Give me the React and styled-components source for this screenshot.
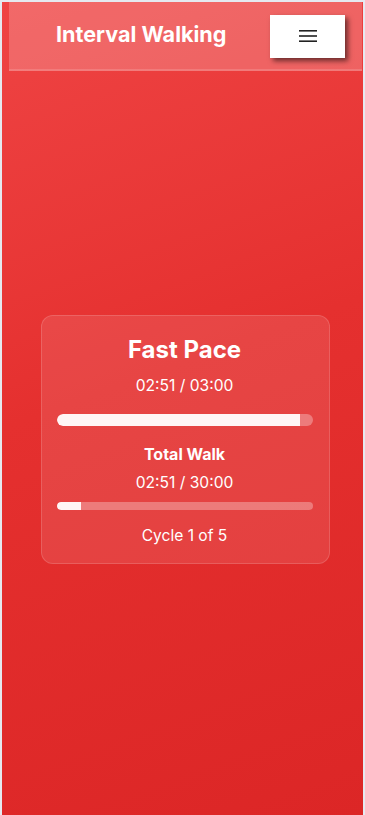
import styled, { createGlobalStyle } from "styled-components";

const GlobalStyle = createGlobalStyle`
  html, body {
    margin: 0;
    padding: 0;
    background: #e5e9f0;
  }
  body {
    font-family: Inter, "Noto Sans", "Liberation Sans", sans-serif;
  }
`;

export default function App() {
  return (
    <>
      <GlobalStyle />
      <Screen>
        <Header>
          <Title>Interval Walking</Title>
          <MenuButton aria-label="Menu">
            <svg width="18" height="12" viewBox="0 0 18 12">
              <rect x="0" y="0" width="18" height="1.6" fill="#222" />
              <rect x="0" y="5.2" width="18" height="1.6" fill="#222" />
              <rect x="0" y="10.4" width="18" height="1.6" fill="#222" />
            </svg>
          </MenuButton>
        </Header>
        <Main>
          <Card>
            <PhaseName>Fast Pace</PhaseName>
            <TimeText>02:51 / 03:00</TimeText>
            <Track $height={12} $gap={16}>
              <Fill style={{ width: "95%" }} />
            </Track>
            <SubTitle>Total Walk</SubTitle>
            <TimeText $tight>02:51 / 30:00</TimeText>
            <Track $height={8} $gap={7}>
              <Fill style={{ width: "9.5%" }} />
            </Track>
            <Cycle>Cycle 1 of 5</Cycle>
          </Card>
        </Main>
      </Screen>
    </>
  );
}

const Screen = styled.div`
  box-sizing: border-box;
  min-height: 815px;
  margin: 2px 2px 0 2px;
  padding: 0 1px 0 7px;
  background: linear-gradient(160deg, #ef4444 0%, #e5302f 45%, #dc2626 100%);
  display: flex;
  flex-direction: column;
`;

const Header = styled.header`
  box-sizing: border-box;
  height: 69px;
  display: flex;
  align-items: center;
  padding: 0 17px 0 47px;
  gap: 44px;
  background: rgba(255, 255, 255, 0.2);
  border-bottom: 2px solid rgba(255, 255, 255, 0.15);
`;

const Title = styled.h1`
  margin: 0 0 4px;
  flex: 1;
  font-size: 21.6px;
  line-height: 28px;
  font-weight: 700;
  color: #fff;
  white-space: nowrap;
`;

const MenuButton = styled.button`
  width: 75px;
  height: 43px;
  margin-top: 1px;
  border: none;
  background: #fff;
  display: flex;
  align-items: center;
  justify-content: center;
  box-shadow: 3px 3px 5px rgba(0, 0, 0, 0.55);
`;

const Main = styled.main`
  flex: 1;
  display: flex;
  align-items: center;
  justify-content: center;
  padding-bottom: 9px;
`;

const Card = styled.section`
  box-sizing: border-box;
  width: 289px;
  margin-left: -1px;
  padding: 18px 16px 15px 15px;
  border-radius: 12px;
  background: rgba(255, 255, 255, 0.1);
  border: 1px solid rgba(255, 255, 255, 0.15);
  color: #fff;
  text-align: center;
  display: flex;
  flex-direction: column;
`;

const PhaseName = styled.h2`
  margin: 0;
  font-size: 24px;
  line-height: 32px;
  font-weight: 700;
`;

const TimeText = styled.div`
  margin-top: ${(p) => (p.$tight ? 5 : 8)}px;
  font-size: 15.6px;
  line-height: 24px;
`;

const Track = styled.div`
  height: ${(p) => p.$height}px;
  margin-top: ${(p) => p.$gap}px;
  border-radius: 999px;
  background: rgba(255, 255, 255, 0.3);
  overflow: hidden;
`;

const Fill = styled.div`
  height: 100%;
  background: #fff5f5;
  border-radius: 999px 0 0 999px;
`;

const SubTitle = styled.h3`
  margin: 16px 0 0;
  font-size: 16px;
  line-height: 24px;
  font-weight: 700;
`;

const Cycle = styled.div`
  margin-top: 14px;
  font-size: 15.6px;
  line-height: 24px;
`;
